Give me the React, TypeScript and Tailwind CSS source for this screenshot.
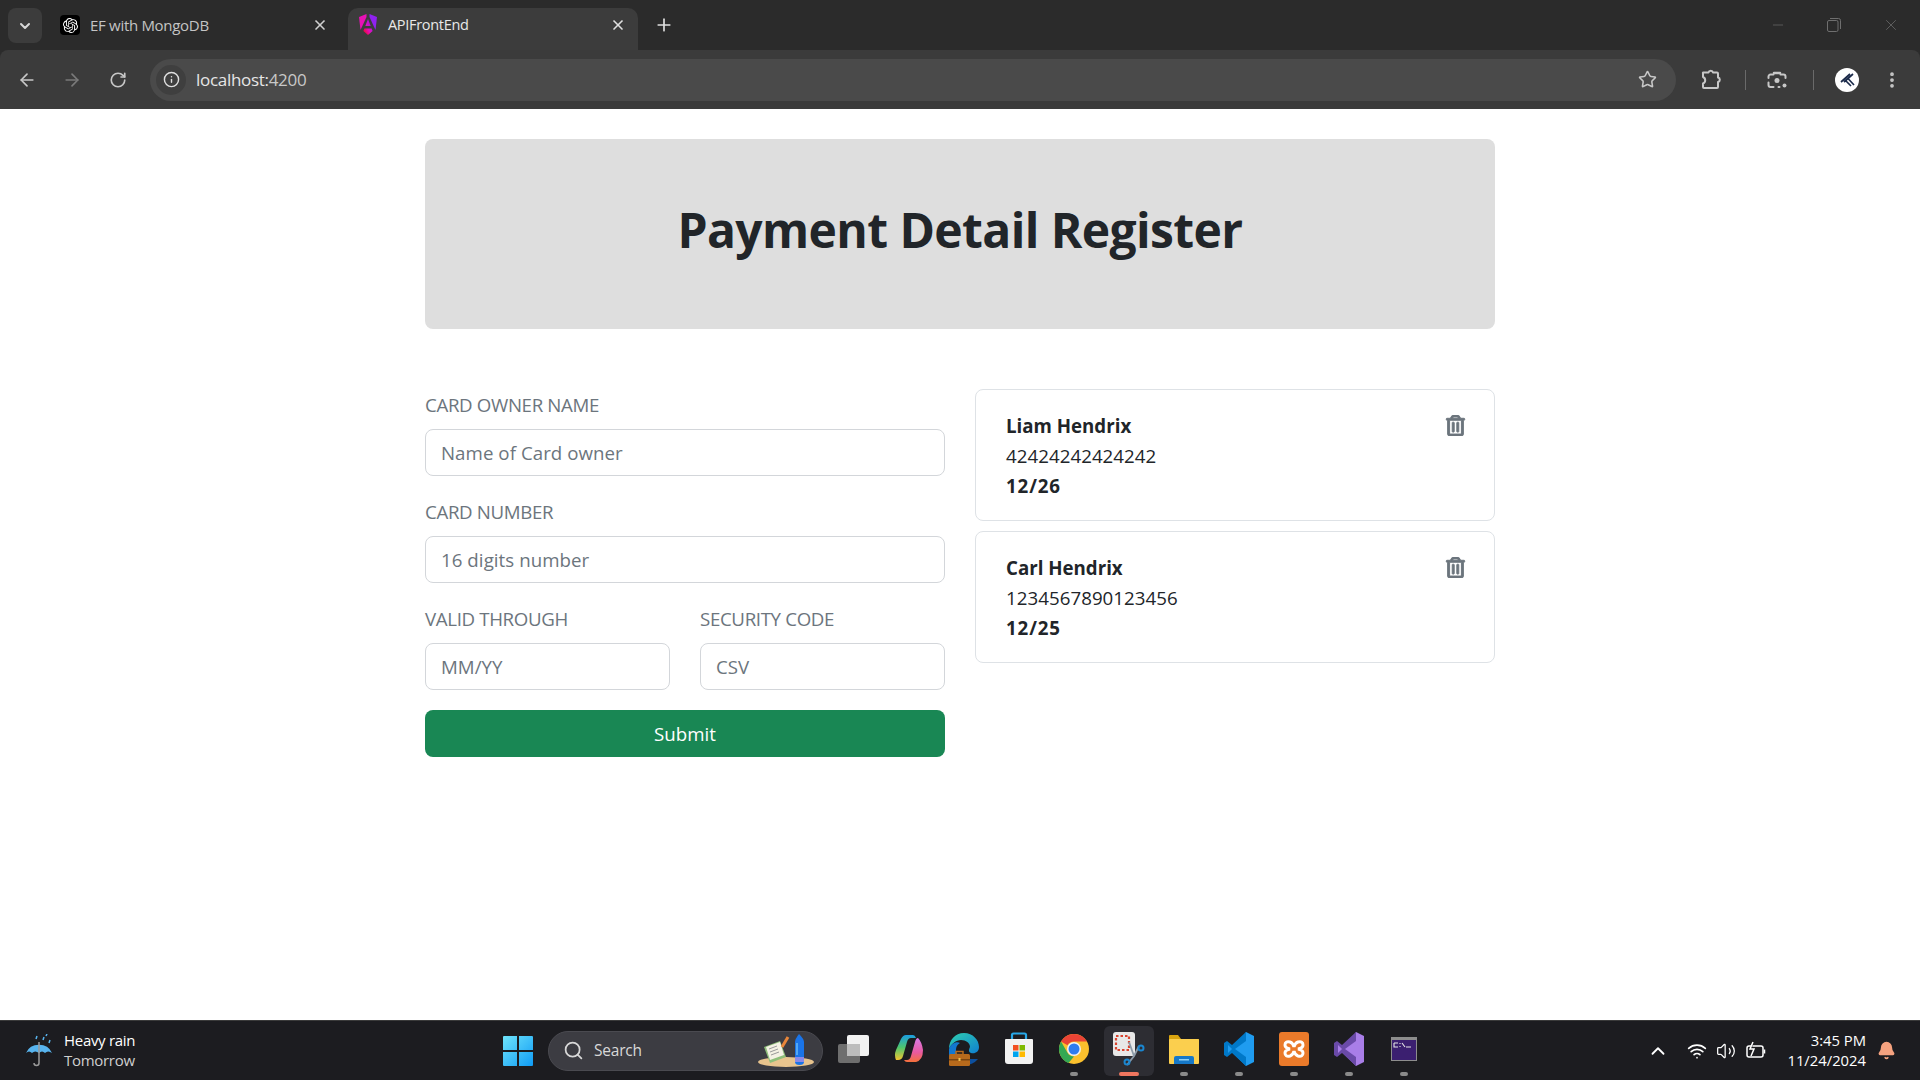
import React from "react";
import { FaRegTrashAlt } from "react-icons/fa";
import { SiOpenai } from "react-icons/si";
import {
  ArrowLeft, ArrowRight, RotateCw, Info, Star, MoreVertical, ChevronDown, ChevronUp, X, Plus, Minus, Search, Wifi, Volume2, Bell,
} from "lucide-react";

const Angular = () => (
  <svg width="20" height="24" viewBox="0 0 20 24">
    <defs>
      <linearGradient id="ang" x1="0" y1="1" x2="1" y2="0">
        <stop offset="0" stopColor="#f0060b" />
        <stop offset="0.45" stopColor="#e40dc0" />
        <stop offset="1" stopColor="#7a22ee" />
      </linearGradient>
    </defs>
    <path d="M8.5 1 L1 4 L2.5 17 L8.5 4z" fill="#e811b5" />
    <path d="M11.5 1 L19 4 L17.5 17 L11.5 4z" fill="#8f22f0" />
    <path d="M10 6 L7.3 13 H12.7z M6.3 15.5 H13.7 L14.6 18 L10 22 L5.4 18z" fill="url(#ang)" />
  </svg>
);

const PuzzleIcon = () => (
  <svg width="22" height="22" viewBox="0 0 22 22" fill="none" stroke="#c7c7c7" strokeWidth="2" strokeLinejoin="round">
    <path d="M3 3.500 H8.500 A2.300 2.300 0 0 1 13 3.500 H17 a1 1 0 0 1 1 1 V8.500 A2.300 2.300 0 0 1 18 13 V18 a1 1 0 0 1-1 1 H4 a1 1 0 0 1-1-1 V14.500 A3.500 3.500 0 0 0 3 8 V4.500 a1 1 0 0 1 0-1z" />
  </svg>
);

const Lens = () => (
  <svg width="22" height="22" viewBox="0 0 22 22" fill="none" stroke="#c7c7c7" strokeWidth="2" strokeLinecap="round">
    <path d="M2.500 9 V7.500 a2 2 0 0 1 2-2 H7.500 M14.500 5.500 H17.500 a2 2 0 0 1 2 2 V9" />
    <path d="M8 4 H14" strokeWidth="2.500" />
    <path d="M2.500 13.500 V16 a2 2 0 0 0 2 2 H7.500" />
    <path d="M12.500 18 H13.500" />
    <circle cx="11" cy="11.500" r="2.500" fill="#c7c7c7" stroke="none" />
    <circle cx="18.500" cy="16.500" r="2" fill="#c7c7c7" stroke="none" />
  </svg>
);

const Avatar = () => (
  <div className="w-6 h-6 rounded-full bg-white flex items-center justify-center">
    <svg width="16" height="14" viewBox="0 0 16 14" fill="none" stroke="#1b2a4a" strokeWidth="1.7">
      <path d="M11 1 L2 9 M14 1 L5 9 M6 7 L12 13 M9 5.5 L15 12" />
    </svg>
  </div>
);

const WinLogo = () => (
  <svg width="30" height="30" viewBox="0 0 30 30">
    <defs>
      <linearGradient id="win" x1="0" y1="0" x2="1" y2="1">
        <stop offset="0" stopColor="#6fe4fb" />
        <stop offset="1" stopColor="#0f9bf5" />
      </linearGradient>
    </defs>
    <path d="M0 1a1 1 0 0 1 1-1h13v14H0z M16 0h13a1 1 0 0 1 1 1v13H16z M0 16h14v14H1a1 1 0 0 1-1-1z M16 16h14v13a1 1 0 0 1-1 1H16z" fill="url(#win)" />
  </svg>
);

const SearchArt = () => (
  <svg width="60" height="36" viewBox="0 0 60 36">
    <ellipse cx="30" cy="29" rx="28" ry="5" fill="#e8c48e" />
    <path d="M8 14 L24 8 L30 24 L14 30z" fill="#8fbf7a" />
    <path d="M10 14 L24 9 L28 22 L14 27z" fill="#f4f1e4" />
    <path d="M13 16l8-3M14 19l8-3M15 22l8-3" stroke="#9a9a9a" strokeWidth="1" />
    <path d="M26 14 L32 4" stroke="#e8863a" strokeWidth="3" />
    <path d="M39 9 q0-3 4-8 q5 5 5 8 v20 q0 3-4.500 3 q-4.500 0-4.500-3z" fill="#1a74e8" />
    <rect x="39" y="24" width="9" height="5" fill="#8a8ae8" />
    <path d="M41 10 v12" stroke="#53a8f4" strokeWidth="2" />
  </svg>
);

const TaskView = () => (
  <svg width="32" height="30" viewBox="0 0 32 30">
    <rect x="0" y="10" width="22" height="19" rx="2" fill="#6e6e6e" />
    <rect x="9" y="1" width="22" height="21" rx="2" fill="#f2f2f2" />
    <rect x="9" y="10" width="13" height="12" fill="#bdbdbd" />
  </svg>
);

const Copilot = () => (
  <svg width="30" height="30" viewBox="0 0 30 30">
    <defs>
      <linearGradient id="cop1" x1="0" y1="0" x2="0" y2="1">
        <stop offset="0" stopColor="#1b9de2" />
        <stop offset="0.5" stopColor="#4fc66d" />
        <stop offset="1" stopColor="#f4c430" />
      </linearGradient>
      <linearGradient id="cop2" x1="0" y1="0" x2="0" y2="1">
        <stop offset="0" stopColor="#d97be8" />
        <stop offset="0.6" stopColor="#e85aa0" />
        <stop offset="1" stopColor="#f4703a" />
      </linearGradient>
    </defs>
    <path d="M12 1 h7 q2 0 3 3 l-5 0 q-3 0-4 4 l-4 14 q-1 4-5 4 h-2 q-2-5 0-10 l5-11 q2-4 5-4z" fill="url(#cop1)" />
    <path d="M24 4 q4 4 5 12 q0 10-7 12 h-9 q-2 0-3-2 h3 q3 0 4-4 l4-14 q1-4 3-4z" fill="url(#cop2)" />
  </svg>
);

const Edge = () => (
  <svg width="30" height="34" viewBox="0 0 30 34">
    <defs>
      <linearGradient id="edg" x1="0" y1="0" x2="1" y2="1">
        <stop offset="0" stopColor="#2fd0b0" />
        <stop offset="1" stopColor="#0f7fd0" />
      </linearGradient>
    </defs>
    <path d="M15 1 C24 1 30 8 30 15 C30 20 26 22 22 21 C19 20 20 17 21 15 C21 11 17 8 12 8 C7 8 2 12 0 17 C0 8 6 1 15 1z" fill="url(#edg)" />
    <path d="M0 17 C2 11 8 9 11 11 C7 13 6 18 8 22 L0 24z" fill="#1277d0" />
    <path d="M16 27 H29 Q24 33 16 33z" fill="#0c4f9e" />
    <rect x="0" y="22" width="21" height="12" rx="1.500" fill="#b76a1c" />
    <rect x="0" y="27" width="21" height="1.500" fill="#7a4510" />
    <rect x="7" y="19.500" width="7" height="3" fill="none" stroke="#b76a1c" strokeWidth="1.500" />
    <rect x="9.500" y="26" width="2" height="3" fill="#f2c14e" />
  </svg>
);

const Store = () => (
  <svg width="30" height="34" viewBox="0 0 30 34">
    <path d="M8 8 V3 a1.500 1.500 0 0 1 1.500-1.500 H20.500 A1.500 1.500 0 0 1 22 3 V8" fill="none" stroke="#28a8e8" strokeWidth="2.200" />
    <path d="M2 7 H28 a1 1 0 0 1 1 1 V29 a3 3 0 0 1-3 3 H4 a3 3 0 0 1-3-3 V8 a1 1 0 0 1 1-1z" fill="#f2f2f2" />
    <rect x="9" y="13" width="5.500" height="5.500" fill="#f25022" />
    <rect x="15.500" y="13" width="5.500" height="5.500" fill="#7fba00" />
    <rect x="9" y="19.500" width="5.500" height="5.500" fill="#00a4ef" />
    <rect x="15.500" y="19.500" width="5.500" height="5.500" fill="#ffb900" />
  </svg>
);

const Chrome = () => (
  <svg width="30" height="30" viewBox="0 0 30 30">
    <circle cx="15" cy="15" r="15" fill="#fbc02d" />
    <path d="M15 0 A15 15 0 0 1 28 7.500 H15 A7.500 7.500 0 0 0 8.500 11.250 L2 7.500 A15 15 0 0 1 15 0z" fill="#ea4335" />
    <path d="M2 7.500 L8.500 18.750 A7.500 7.500 0 0 0 15 22.500 L9.500 29 A15 15 0 0 1 2 7.500z" fill="#34a853" />
    <circle cx="15" cy="15" r="7" fill="#f2f2f2" />
    <circle cx="15" cy="15" r="5.500" fill="#2f7cf0" />
  </svg>
);

const Snip = () => (
  <svg width="32" height="34" viewBox="0 0 32 34">
    <rect x="0" y="0" width="22" height="24" rx="3" fill="#e8e8e8" />
    <rect x="3" y="4" width="13" height="14" fill="none" stroke="#d9432f" strokeWidth="2.200" strokeDasharray="2.500 2" />
    <path d="M16 10 L21 24 L14 33 M26 14 L21 24" stroke="#8c9aa8" strokeWidth="1.800" fill="none" />
    <circle cx="14" cy="30" r="2.500" fill="none" stroke="#1a86d0" strokeWidth="2" />
    <circle cx="28" cy="16" r="2.500" fill="none" stroke="#1a86d0" strokeWidth="2" />
  </svg>
);

const Folder = () => (
  <svg width="30" height="30" viewBox="0 0 30 30">
    <path d="M0 2 a1 1 0 0 1 1-1 H9 L12 5 H29 a1 1 0 0 1 1 1 V10 H0z" fill="#d9a40f" />
    <rect x="0" y="5" width="30" height="25" rx="1" fill="#fbcf4e" />
    <path d="M5 30 V24 a2 2 0 0 1 2-2 H23 a2 2 0 0 1 2 2 V30z" fill="#1678c8" />
    <rect x="10" y="25" width="10" height="1.500" fill="#8ed0f5" />
  </svg>
);

const VSCode = () => (
  <svg width="30" height="34" viewBox="0 0 30 34">
    <path d="M22 0 L30 4 V30 L22 34 L8 20z" fill="#1f9cf0" />
    <path d="M22 0 L22 9 L11 17 L22 25 V34 L8 21 L3 25 L0 23 V11 L3 9 L8 13z" fill="#0078c8" />
    <path d="M4 13 L8 17 L4 21z" fill="#1f9cf0" />
  </svg>
);

const Xampp = () => (
  <svg width="30" height="34" viewBox="0 0 30 34">
    <rect width="30" height="34" rx="3" fill="#ea7a2a" />
    <path d="M11 10 q-5-1-5 3 q0 3 5 4 q-5 1-5 4 q0 4 5 3 q3-1 4-5 q1 4 4 5 q5 1 5-3 q0-3-5-4 q5-1 5-4 q0-4-5-3 q-3 1-4 5 q-1-4-4-5z" fill="none" stroke="#ffffff" strokeWidth="3" />
  </svg>
);

const VS = () => (
  <svg width="30" height="34" viewBox="0 0 30 34">
    <path d="M22 0 L30 4 V30 L22 34 L8 20z" fill="#a97ee8" />
    <path d="M22 0 L22 9 L11 17 L22 25 V34 L8 21 L3 25 L0 23 V11 L3 9 L8 13z" fill="#6a4aa8" />
    <path d="M4 13 L8 17 L4 21z" fill="#a97ee8" />
  </svg>
);

const Term = () => (
  <svg width="26" height="24" viewBox="0 0 26 24">
    <rect x="0.500" y="0.500" width="25" height="23" fill="#3b1f70" stroke="#8d8d8d" />
    <rect x="1" y="1" width="24" height="2" fill="#8d8d8d" />
    <path d="M3 6h4M3 6v4h4M9 6v1M9 9v1M11 6l3 4M15 10h5" stroke="#e6e6e6" strokeWidth="1.100" fill="none" />
  </svg>
);

const TaskIcon = ({ children, active, running }: { children: React.ReactNode; active?: boolean; running?: boolean }) => (
  <div className={active ? "w-[50px] h-[50px] mx-[2.500px] rounded-md bg-[#2d2d33] flex flex-col items-center" : "w-[50px] h-[50px] mx-[2.500px] rounded-md flex flex-col items-center"}>
    <div className="h-[46px] w-full flex items-center justify-center">{children}</div>
    {active ? <div className="w-5 h-[4px] rounded-full bg-[#f0765f]" /> : running ? <div className="w-2 h-[4px] rounded-full bg-[#8a8a8a]" /> : null}
  </div>
);

const Field = ({ label, placeholder }: { label: string; placeholder: string }) => (
  <div className="flex flex-col">
    <label className="text-[18.700px] leading-[30px] mb-[9px] text-[#6c757d] tracking-[-0.350px]">{label}</label>
    <input
      placeholder={placeholder}
      className="h-[47px] w-full border border-[#d3d6da] rounded-lg pl-[15px] pr-4 text-[18.700px] bg-white placeholder:text-[#6c757d] tracking-[0.050px]"
    />
  </div>
);

const Card = ({ name, num, date }: { name: string; num: string; date: string }) => (
  <div className="border border-[#dee2e6] rounded-lg px-[30px] pt-[21px] pb-[19px] flex justify-between text-[18.700px] leading-[30px] text-[#212529]">
    <div>
      <div className="font-bold">{name}</div>
      <div className="tracking-[0.050px]">{num}</div>
      <div className="font-bold tracking-[0.900px]">{date}</div>
    </div>
    <div className="h-[28px] flex items-center text-[#6c757d] -mr-[2px]">
      <FaRegTrashAlt size={21} stroke="currentColor" strokeWidth={24} />
    </div>
  </div>
);

export default function App() {
  return (
    <div className="h-screen w-full flex flex-col overflow-hidden bg-white font-['Open_Sans',sans-serif]">
      {/* tab strip */}
      <div className="h-[50px] bg-[#2b2b2b] flex items-end pl-2 shrink-0">
        <div className="w-[34px] h-[35px] mb-[7px] rounded-lg bg-[#3c3c3c] flex items-center justify-center text-[#d8d8d8]">
          <ChevronDown size={16} strokeWidth={3} />
        </div>
        <div className="w-[306px] h-[42px] flex items-center pl-[18px] pr-[20px] pb-[8px] text-[#c4c4c4]">
          <div className="w-5 h-5 rounded bg-black flex items-center justify-center text-white mr-[10px]">
            <SiOpenai size={15} />
          </div>
          <span className="flex-1 text-[15px] tracking-[-0.300px]">EF with MongoDB</span>
          <X size={16} strokeWidth={2.500} className="text-[#d0d0d0]" />
        </div>
        <div className="w-[290px] h-[42px] rounded-t-[10px] bg-[#3c3c3c] flex items-center pl-[10px] pr-[12px] pb-[8px] text-[#e8e8e8]">
          <div className="w-5 flex justify-center mr-[10px]"><Angular /></div>
          <span className="flex-1 text-[14.500px] tracking-[-0.300px]">APIFrontEnd</span>
          <X size={16} strokeWidth={2.500} className="text-[#e0e0e0]" />
        </div>
        <div className="w-[52px] h-[42px] pb-[8px] flex items-center justify-center text-[#e0e0e0]">
          <Plus size={20} strokeWidth={2} />
        </div>
        <div className="flex-1" />
        <div className="h-[50px] mr-px flex items-center text-[#6f6f6f]">
          <div className="w-[57px] flex justify-center"><Minus size={16} strokeWidth={1} /></div>
          <div className="w-[56px] flex justify-center">
            <svg width="14" height="14" viewBox="0 0 14 14" fill="none" stroke="#6f6f6f" strokeWidth="1">
              <rect x="0.500" y="2.500" width="10.500" height="11" rx="1.500" />
              <path d="M3 .5h8.500a2 2 0 0 1 2 2V11" />
            </svg>
          </div>
          <div className="w-[57px] flex justify-center"><X size={18} strokeWidth={1} /></div>
        </div>
      </div>

      {/* toolbar */}
      <div className="bg-[#2b2b2b] shrink-0">
        <div className="h-[59px] bg-[#3b3b3b] rounded-tl-lg rounded-tr-lg flex items-center text-[#c7c7c7]">
          <div className="w-[54px] flex justify-center"><ArrowLeft size={20} strokeWidth={2} /></div>
          <div className="w-[36px] flex justify-center text-[#7a7a7a]"><ArrowRight size={20} strokeWidth={2} /></div>
          <div className="w-[56px] flex justify-center"><RotateCw size={18} strokeWidth={2.200} /></div>
          <div className="w-[1526px] ml-[4px] h-[42px] rounded-full bg-[#4a4a4a] flex items-center pl-[6px] pr-[19px]">
            <div className="w-[30px] h-[30px] rounded-full bg-[#3f3f3f] flex items-center justify-center text-[#e0e0e0]"><Info size={17} strokeWidth={2} /></div>
            <span className="ml-[10px] text-[17px] text-[#e6e6e6] flex-1 tracking-[-0.300px]">localhost:<span className="text-[#c8c8c8]">4200</span></span>
            <Star size={19} strokeWidth={2} />
          </div>
          <div className="flex-1 flex items-center">
            <div className="w-[42px] ml-[14px] mr-[13px] flex justify-center"><PuzzleIcon /></div>
            <div className="w-[1px] h-[20px] bg-[#6a6a6a]" />
            <div className="w-[62px] mr-[5px] flex justify-center"><Lens /></div>
            <div className="w-[1px] h-[20px] bg-[#6a6a6a]" />
            <div className="w-[66px] flex justify-center"><Avatar /></div>
            <div className="w-[24px] flex justify-center"><MoreVertical size={20} strokeWidth={2.500} /></div>
          </div>
        </div>
      </div>

      {/* page */}
      <div className="flex-1 min-h-0 pt-[30px] flex justify-center">
        <div className="w-[1070px]">
          <div className="h-[190px] rounded-lg bg-[#dedede] flex items-center justify-center pb-[8px]">
            <h1 className="text-[48px] font-bold leading-[56px] text-[#212529] tracking-[-0.600px]">Payment Detail Register</h1>
          </div>
          <div className="mt-[60px] grid grid-cols-2 gap-[30px] items-start">
            <form className="flex flex-col gap-[21px] pt-px">
              <Field label="CARD OWNER NAME" placeholder="Name of Card owner" />
              <Field label="CARD NUMBER" placeholder="16 digits number" />
              <div className="grid grid-cols-2 gap-[30px]">
                <Field label="VALID THROUGH" placeholder="MM/YY" />
                <Field label="SECURITY CODE" placeholder="CSV" />
              </div>
              <button type="button" className="h-[47px] -mt-px pt-[2px] rounded-lg bg-[#198754] text-white text-[18.700px]">Submit</button>
            </form>
            <div className="flex flex-col gap-[10px]">
              <Card name="Liam Hendrix" num="42424242424242" date="12/26" />
              <Card name="Carl Hendrix" num="1234567890123456" date="12/25" />
            </div>
          </div>
        </div>
      </div>

      {/* taskbar */}
      <div className="h-[60px] bg-[#1c1c20] border-t border-[#3a3a3a] flex items-center shrink-0">
        <div className="w-[503px] flex items-center pl-[24px]">
          <svg width="32" height="34" viewBox="0 0 32 34" fill="none">
            <path d="M2 19 A14 13 0 0 1 28 19 Q24 16 21 19 Q18 16 15 19 Q11 16 8 19 Q5 16 2 19z" fill="#58b4ee" />
            <path d="M15 8V29a2.500 2.500 0 0 1-5 0" stroke="#9a9a9a" strokeWidth="1.500" />
            <path d="M12 5l1-3M19 6l1-3M25 9l1-3M22 2l1-2" stroke="#58b4ee" strokeWidth="1.500" />
          </svg>
          <div className="ml-[8px] pb-[2px] text-[15px] leading-[20px] tracking-[-0.300px]">
            <div className="text-white">Heavy rain</div>
            <div className="text-[#cfcfcf]">Tomorrow</div>
          </div>
        </div>
        <WinLogo />
        <div className="ml-[15px] w-[275px] h-[40px] rounded-full bg-[#3c3c42] border border-[#4a4a50] flex items-center pl-[14px] pr-[6px] text-[#d8d8d8]">
          <Search size={21} strokeWidth={2} />
          <span className="ml-[10px] flex-1 text-[15.500px] tracking-[-0.200px]">Search</span>
          <SearchArt />
        </div>
        <div className="ml-[3px] flex items-center">
          <TaskIcon><TaskView /></TaskIcon>
          <TaskIcon><Copilot /></TaskIcon>
          <TaskIcon><Edge /></TaskIcon>
          <TaskIcon><Store /></TaskIcon>
          <TaskIcon running><Chrome /></TaskIcon>
          <TaskIcon active><Snip /></TaskIcon>
          <TaskIcon running><Folder /></TaskIcon>
          <TaskIcon running><VSCode /></TaskIcon>
          <TaskIcon running><Xampp /></TaskIcon>
          <TaskIcon running><VS /></TaskIcon>
          <TaskIcon running><Term /></TaskIcon>
        </div>
        <div className="flex-1 flex items-center justify-end pr-[24px] text-white">
          <ChevronUp size={22} strokeWidth={2} className="mr-[18px]" />
          <Wifi size={20} strokeWidth={2} className="mr-[9px]" />
          <Volume2 size={20} strokeWidth={1.500} className="mr-[10px]" />
          <svg width="20" height="20" viewBox="0 0 20 20" fill="none" stroke="#ffffff" strokeWidth="1.500" className="mr-[21px]">
            <rect x="1" y="5" width="16" height="11" rx="2" />
            <path d="M18.500 8.500v4" />
            <path d="M7 1L4 8h4l-3 7" fill="#1c1c20" />
          </svg>
          <div className="text-right text-[14.800px] leading-[20px] text-white pb-[2px]">
            <div>3:45 PM</div>
            <div>11/24/2024</div>
          </div>
          <Bell size={19} fill="#f5a27f" stroke="#f5a27f" className="ml-[11px]" />
        </div>
      </div>
    </div>
  );
}
